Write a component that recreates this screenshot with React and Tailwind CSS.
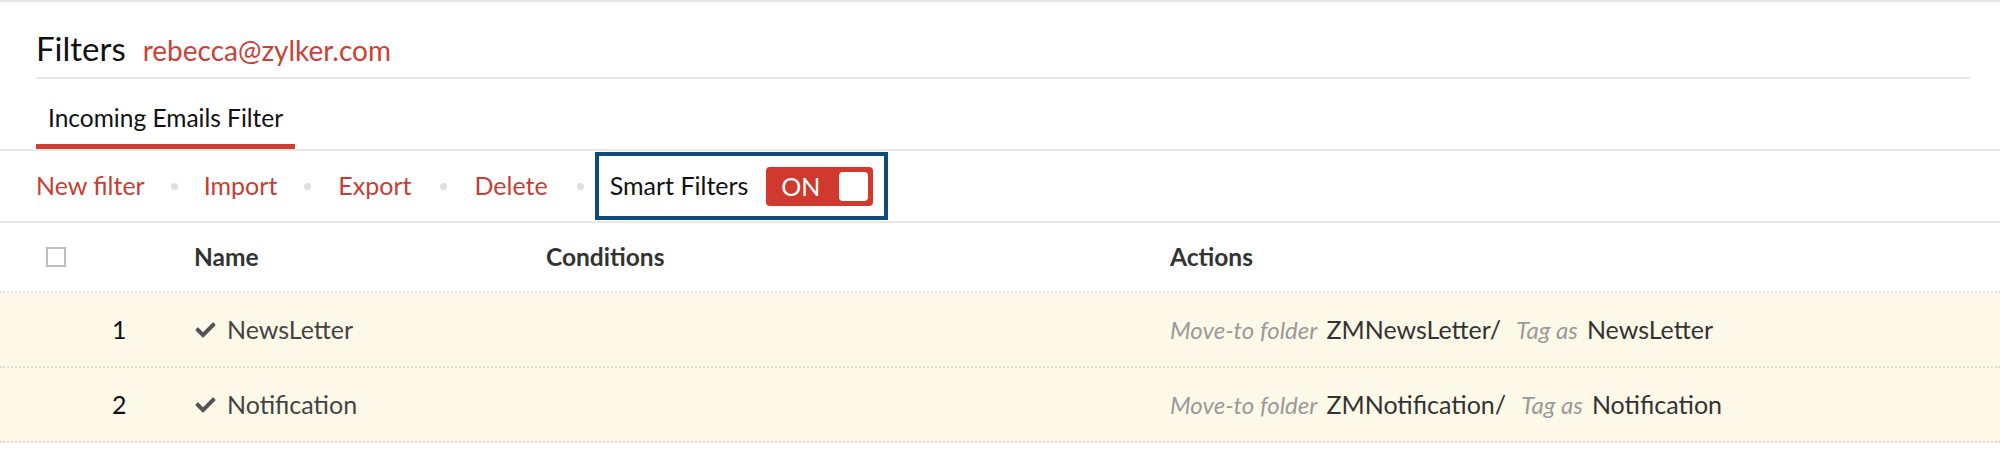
import React from "react";
import { FaCheck } from "react-icons/fa";

const rows = [
  { n: 1, name: "NewsLetter", folder: "ZMNewsLetter/", tag: "NewsLetter" },
  { n: 2, name: "Notification", folder: "ZMNotification/", tag: "Notification" },
];

function Dot() {
  return <span className="w-[7px] h-[7px] rounded-full bg-[#e0e0e0] mx-[26px]" />;
}

export default function App() {
  return (
    <div className="w-[2000px] h-[466px] bg-white font-['Lato','Open_Sans',sans-serif] border-t-2 border-[#e6e6e6] overflow-hidden">
      {/* Cabecera */}
      <div className="pl-[36px] pr-[30px]">
        <div className="flex items-baseline h-[77px] pt-[30px] border-b-2 border-[#e8e8e8]">
          <span className="text-[33px] text-[#111] leading-none">Filters</span>
          <span className="text-[28px] text-[#cc4137] leading-none ml-[17px]">rebecca@zylker.com</span>
        </div>
      </div>

      {/* Pestaña */}
      <div className="border-b-2 border-[#e8e8e8] pl-[36px] h-[72px] flex items-end">
        <div className="border-b-[5px] border-[#d03f34] px-[12px] pb-[14px] text-[24.5px] text-[#111] leading-none">
          Incoming Emails Filter
        </div>
      </div>

      {/* Barra de acciones */}
      <div className="flex items-center h-[72px] pl-[36px] border-b-2 border-[#e8e8e8] text-[25px]">
        <span className="text-[#c73e35]">New filter</span>
        <Dot />
        <span className="text-[#c73e35]">Import</span>
        <span className="w-[7px] h-[7px] rounded-full bg-[#e0e0e0] mx-[27px]" />
        <span className="text-[#c73e35]">Export</span>
        <span className="w-[7px] h-[7px] rounded-full bg-[#e0e0e0] mx-[28px]" />
        <span className="text-[#c73e35]">Delete</span>
        <span className="w-[7px] h-[7px] rounded-full bg-[#e0e0e0] ml-[29px] mr-[11px]" />
        <div className="flex items-center h-[68px] border-4 border-[#0f4a7c] pl-[11px] pr-[11px]">
          <span className="text-[#111]">Smart Filters</span>
          <div className="ml-[18px] flex items-center justify-between w-[107px] h-[39px] rounded-[4px] bg-[#d0392e] pl-[15px] pr-[5px]">
            <span className="text-white text-[25px] leading-none">ON</span>
            <span className="w-[29px] h-[29px] rounded-[4px] bg-white" />
          </div>
        </div>
      </div>

      {/* Tabla */}
      <div className="grid grid-cols-[194px_352px_624px_1fr] items-center h-[70px] border-b-2 border-dotted border-[#e2e2e2] text-[24.5px] font-bold text-[#333]">
        <div className="pl-[46px]">
          <span className="block w-[20px] h-[20px] border-2 border-[#bdbdbd]" />
        </div>
        <div>Name</div>
        <div>Conditions</div>
        <div>Actions</div>
      </div>
      {rows.map((r) => (
        <div
          key={r.n}
          className="grid grid-cols-[194px_352px_624px_1fr] items-center h-[75px] bg-[#fdf9e8] border-b-2 border-dotted border-[#e2dfd2] text-[25px]"
        >
          <div className="pl-[112px] text-[#111]">{r.n}</div>
          <div className="flex items-center text-[#444]">
            <FaCheck className="w-[23px] h-[20px] text-[#555] mr-[10px]" />
            {r.name}
          </div>
          <div />
          <div className="flex items-center">
            <span className="italic text-[24px] text-[#9a9a9a] mr-[9px]">Move-to folder</span>
            <span className="text-[#333]">{r.folder}</span>
            <span className="italic text-[24px] text-[#9a9a9a] ml-[15px] mr-[9px]">Tag as</span>
            <span className="text-[#333]">{r.tag}</span>
          </div>
        </div>
      ))}
    </div>
  );
}
